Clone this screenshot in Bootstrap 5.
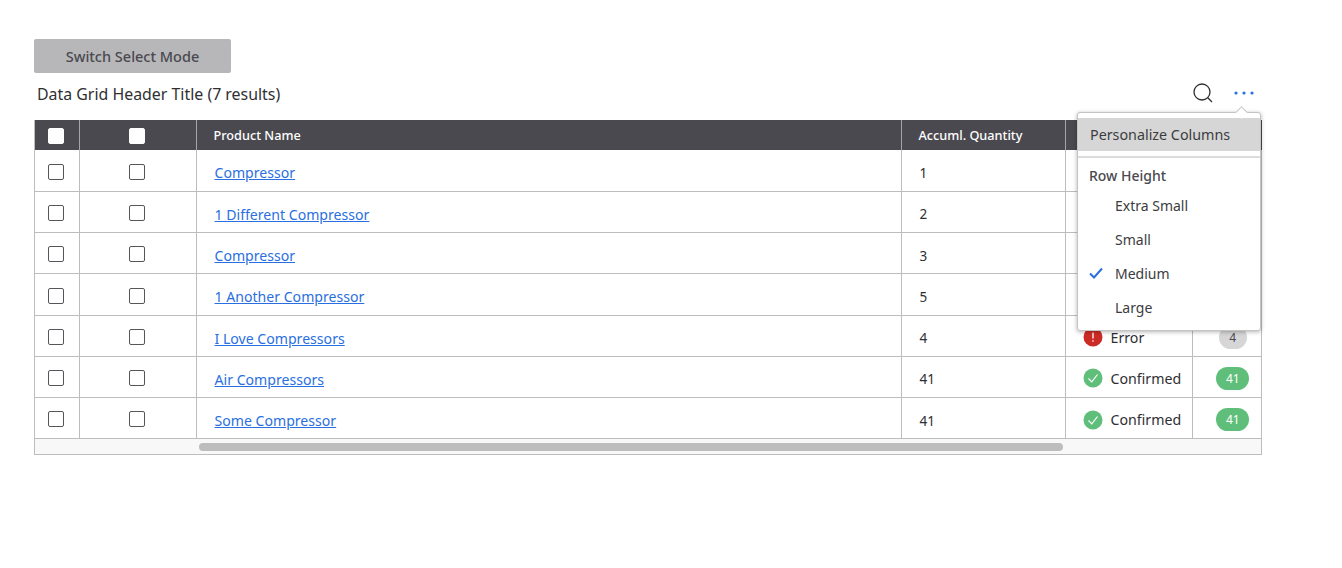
<!DOCTYPE html>
<html lang="en">
<head>
  <meta charset="UTF-8">
  <meta name="viewport" content="width=device-width, initial-scale=1.0">
  <title>Data Grid</title>
  <link href="https://cdn.jsdelivr.net/npm/bootstrap@5.3.2/dist/css/bootstrap.min.css" rel="stylesheet">
  <style>
    body {
      background-color: #fff;
      color: #2f2f33;
      font-family: "Noto Sans", "Liberation Sans", sans-serif;
      font-size: 14px;
    }
    .page-wrap {
      width: 1228px;
      margin-left: 34px;
      padding-top: 39px;
    }
    .switch-btn {
      width: 197px;
      height: 34px;
      padding: 2px 0 0;
      border: 0;
      border-radius: 2px;
      background-color: #b7b7b9;
      color: #4a494f;
      font-size: 14.5px;
      font-weight: 500;
    }
    .grid-head {
      height: 47px;
      padding-left: 3px;
      padding-right: 8px;
      padding-bottom: 7px;
    }
    .grid-title {
      font-size: 15.9px;
      color: #2f2f33;
      line-height: 24px;
      padding-top: 1px;
    }
    .tool-gap {
      gap: 20px;
    }
    .tool-btn {
      background: none;
      border: 0;
      padding: 0;
      line-height: 0;
    }
    .grid-wrap {
      position: relative;
    }
    .grid-box {
      border: 1px solid #bdbdbd;
      border-top: 0;
    }
    .grid-table {
      table-layout: fixed;
      width: 1227px;
      margin: 0;
      border-collapse: collapse;
    }
    .grid-table th {
      height: 30px;
      padding: 1px 0 0 17px;
      background-color: #4a494f;
      color: #fff;
      font-size: 12.7px;
      font-weight: 500;
      border-right: 1px solid #a5a5a8;
      vertical-align: middle;
    }
    .grid-table td {
      height: 41.27px;
      padding: 5px 0 0 18px;
      border-right: 1px solid #bdbdbd;
      border-bottom: 1px solid #bdbdbd;
      vertical-align: middle;
      font-size: 13.5px;
    }
    .grid-table th:last-child,
    .grid-table td:last-child {
      border-right: 0;
    }
    .grid-table th.cell-check,
    .grid-table td.cell-check {
      padding: 0 1px 0 0;
      text-align: center;
    }
    .grid-table td a {
      color: #2a6fe0;
      font-size: 14.1px;
    }
    .grid-table .cell-status {
      padding-top: 3px;
      padding-left: 17px;
    }
    .grid-table .cell-count {
      padding: 3px 0 0 11px;
      text-align: center;
    }
    .box-check {
      display: inline-block;
      width: 16px;
      height: 16px;
      border: 1px solid #55555a;
      border-radius: 2px;
      background: #fff;
      vertical-align: middle;
    }
    th .box-check {
      border-color: #fff;
    }
    .status-line {
      display: flex;
      align-items: center;
      gap: 8px;
      font-size: 14.2px;
    }
    .count-pill {
      display: inline-block;
      min-width: 33px;
      height: 23px;
      line-height: 23px;
      border-radius: 12px;
      color: #fff;
      font-size: 12px;
      text-align: center;
    }
    .count-green {
      background-color: #5fbf7a;
    }
    .count-grey {
      min-width: 28px;
      background-color: #d6d6d6;
      color: #4a494f;
    }
    .scroll-track {
      height: 15px;
      padding-top: 4px;
      background-color: #f8f8f8;
      padding-left: 164px;
    }
    .scroll-thumb {
      width: 864px;
      height: 8px;
      border-radius: 4px;
      background-color: #bdbdbd;
    }
    .grid-menu {
      position: absolute;
      top: -8px;
      right: 1px;
      width: 184px;
      background: #fff;
      border: 1px solid #c4c4c4;
      border-radius: 3px;
      box-shadow: 0 1px 4px rgba(0, 0, 0, .3);
      padding-top: 5px;
      padding-bottom: 4.4px;
      z-index: 5;
    }
    .grid-menu::before {
      content: "";
      position: absolute;
      top: -5px;
      right: 14px;
      width: 9px;
      height: 9px;
      background: #fff;
      border-top: 1px solid #c4c4c4;
      border-left: 1px solid #c4c4c4;
      transform: rotate(45deg);
    }
    .menu-top {
      height: 33px;
      line-height: 33px;
      padding-left: 12px;
      background-color: #d6d6d6;
      color: #3c3c40;
      font-size: 14.3px;
    }
    .menu-rule {
      height: 2px;
      margin-top: 5px;
      background-color: #dcdcdc;
    }
    .menu-label {
      padding-left: 11px;
      margin-top: 7.6px;
      margin-bottom: 3px;
      font-size: 14px;
      font-weight: 500;
      color: #4a494f;
      line-height: 20px;
    }
    .menu-pick {
      position: relative;
      height: 34.3px;
      line-height: 34px;
      padding-left: 37px;
      font-size: 14px;
      color: #3c3c40;
    }
    .menu-pick svg {
      position: absolute;
      left: 11px;
      top: 10px;
    }
  </style>
</head>
<body>
  <div class="page-wrap">
    <button class="switch-btn d-block" type="button">Switch Select Mode</button>

    <!-- Grid header -->
    <div class="grid-head d-flex align-items-center justify-content-between">
      <span class="grid-title">Data Grid Header Title (7 results)</span>
      <div class="d-flex align-items-center tool-gap">
        <button class="tool-btn" type="button" aria-label="Search">
          <svg width="22" height="22" viewBox="0 0 22 22" fill="none" stroke="#2f2f33" stroke-width="1.3">
            <circle cx="10" cy="10" r="8"/>
            <path d="M15.8 15.8 20 20"/>
          </svg>
        </button>
        <button class="tool-btn" type="button" aria-label="More">
          <svg width="20" height="4" viewBox="0 0 20 4" fill="#2a6fe0">
            <circle cx="2" cy="2" r="1.6"/>
            <circle cx="10" cy="2" r="1.6"/>
            <circle cx="18" cy="2" r="1.6"/>
          </svg>
        </button>
      </div>
    </div>

    <div class="grid-wrap">
      <div class="grid-box">
        <table class="grid-table">
          <colgroup>
            <col style="width:44px">
            <col style="width:117px">
            <col style="width:705px">
            <col style="width:164px">
            <col style="width:127px">
            <col style="width:70px">
          </colgroup>
          <thead>
            <tr>
              <th class="cell-check"><span class="box-check"></span></th>
              <th class="cell-check"><span class="box-check"></span></th>
              <th>Product Name</th>
              <th>Accuml. Quantity</th>
              <th></th>
              <th></th>
            </tr>
          </thead>
          <tbody id="grid-body"></tbody>
        </table>
        <div class="scroll-track"><div class="scroll-thumb"></div></div>
      </div>

      <!-- Open settings menu -->
      <div class="grid-menu">
        <div class="menu-top">Personalize Columns</div>
        <div class="menu-rule"></div>
        <div class="menu-label">Row Height</div>
        <div class="menu-pick">Extra Small</div>
        <div class="menu-pick">Small</div>
        <div class="menu-pick">
          <svg width="14" height="12" viewBox="0 0 14 12" fill="none" stroke="#2a6fe0" stroke-width="2"><path d="M1 6.5 5 10.5 13 1.5"/></svg>
          Medium
        </div>
        <div class="menu-pick">Large</div>
      </div>
    </div>
  </div>

  <script src="https://cdn.jsdelivr.net/npm/bootstrap@5.3.2/dist/js/bootstrap.bundle.min.js"></script>
  <script>
    // status is null where the open menu covers the cell
    const rows = [
      ['Compressor', 1, null],
      ['1 Different Compressor', 2, null],
      ['Compressor', 3, null],
      ['1 Another Compressor', 5, null],
      ['I Love Compressors', 4, 'error'],
      ['Air Compressors', 41, 'ok'],
      ['Some Compressor', 41, 'ok']
    ];
    const okIcon = '<svg width="20" height="20" viewBox="0 0 20 20"><circle cx="10" cy="10" r="9.5" fill="#5fbf7a"/><path d="M5.5 10.5 8.8 13.8 14.5 6.5" fill="none" stroke="#fff" stroke-width="1.2"/></svg>';
    const errorIcon = '<svg width="20" height="20" viewBox="0 0 20 20"><circle cx="10" cy="10" r="9.5" fill="#cc2b25"/><path d="M10 5.5v6M10 13.2v1.6" fill="none" stroke="#fff" stroke-width="1.3"/></svg>';
    document.getElementById('grid-body').innerHTML = rows.map(function(r) {
      const isOk = r[2] === 'ok';
      const status = r[2] ? '<div class="status-line">' + (isOk ? okIcon : errorIcon) + (isOk ? 'Confirmed' : 'Error') + '</div>' : '';
      const count = r[2] ? '<span class="count-pill ' + (isOk ? 'count-green' : 'count-grey') + '">' + r[1] + '</span>' : '';
      return '<tr>' +
        '<td class="cell-check"><span class="box-check"></span></td>' +
        '<td class="cell-check"><span class="box-check"></span></td>' +
        '<td><a href="#">' + r[0] + '</a></td>' +
        '<td>' + r[1] + '</td>' +
        '<td class="cell-status">' + status + '</td>' +
        '<td class="cell-count">' + count + '</td>' +
        '</tr>';
    }).join('');
  </script>
</body>
</html>
